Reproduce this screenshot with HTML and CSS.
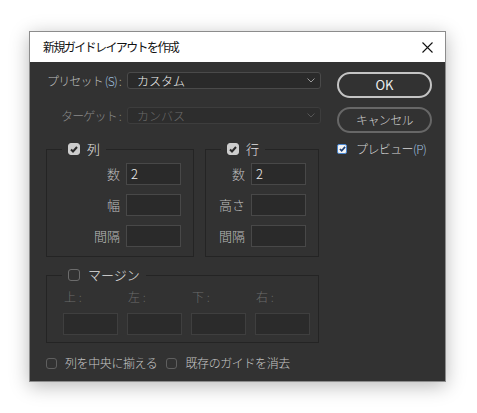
FILE: index.html
```html
<!DOCTYPE html>
<html lang="ja">
<head>
<meta charset="utf-8">
<title>新規ガイドレイアウトを作成</title>
<link rel="stylesheet" href="styles.css">
</head>
<body>
<div class="stage">
  <div class="dialog">
    <div class="titlebar">
      <span class="title">新規ガイドレイアウトを作成</span>
      <svg class="close" width="11" height="11" viewBox="0 0 11 11"><path d="M0.5 0.5L10.5 10.5M10.5 0.5L0.5 10.5" stroke="#111" stroke-width="1.1" fill="none"/></svg>
    </div>
    <div class="content">
      <div class="main">
        <div class="field-row">
          <span class="flabel"><span>プリセット <span class="acc">(S)</span> :</span></span>
          <div class="select">
            <span class="sel-text">カスタム</span>
            <svg width="8" height="5" viewBox="0 0 8 5"><path d="M0.5 0.5L4 4L7.5 0.5" stroke="#9a9a9a" fill="none"/></svg>
          </div>
        </div>
        <div class="field-row second disabled">
          <span class="flabel"><span>ターゲット :</span></span>
          <div class="select">
            <span class="sel-text">カンバス</span>
            <svg width="8" height="5" viewBox="0 0 8 5"><path d="M0.5 0.5L4 4L7.5 0.5" stroke="#555" fill="none"/></svg>
          </div>
        </div>
        <div class="groups">
          <fieldset class="group cols">
            <legend><span class="cb checked"><svg width="8" height="7" viewBox="0 0 8 7"><path d="M1 3.5L3 5.5L7 1" stroke="#2a2a2a" stroke-width="2" fill="none"/></svg></span><span class="lg-text">列</span></legend>
            <div class="grid">
              <span class="glabel">数</span><div class="input">2</div>
              <span class="glabel">幅</span><div class="input"></div>
              <span class="glabel">間隔</span><div class="input"></div>
            </div>
          </fieldset>
          <fieldset class="group rows">
            <legend><span class="cb checked"><svg width="8" height="7" viewBox="0 0 8 7"><path d="M1 3.5L3 5.5L7 1" stroke="#2a2a2a" stroke-width="2" fill="none"/></svg></span><span class="lg-text">行</span></legend>
            <div class="grid">
              <span class="glabel">数</span><div class="input">2</div>
              <span class="glabel">高さ</span><div class="input"></div>
              <span class="glabel">間隔</span><div class="input"></div>
            </div>
          </fieldset>
        </div>
        <fieldset class="group margin">
          <legend><span class="cb"></span><span class="lg-text">マージン</span></legend>
          <div class="mgrid">
            <div class="mcell"><span class="mlabel">上 :</span><div class="input off"></div></div>
            <div class="mcell"><span class="mlabel">左 :</span><div class="input off"></div></div>
            <div class="mcell"><span class="mlabel">下 :</span><div class="input off"></div></div>
            <div class="mcell"><span class="mlabel">右 :</span><div class="input off"></div></div>
          </div>
        </fieldset>
        <div class="bottom">
          <span class="cb small"></span><span class="btext">列を中央に揃える</span>
          <span class="cb small"></span><span class="btext">既存のガイドを消去</span>
        </div>
      </div>
      <div class="side">
        <div class="btn primary">OK</div>
        <div class="btn">キャンセル</div>
        <div class="preview">
          <span class="cb focus"><svg width="8" height="7" viewBox="0 0 8 7"><path d="M1 3.5L3 5.5L7 1" stroke="#1d3f73" stroke-width="2" fill="none"/></svg></span>
          <span class="ptext">プレビュー<span class="acc">(P)</span></span>
        </div>
      </div>
    </div>
  </div>
</div>
</body>
</html>
```
FILE: styles.css
```css
html, body {
  margin: 0;
  padding: 0;
  background: #ffffff;
}
body {
  font-family: "Noto Sans CJK JP", "Noto Sans", sans-serif;
  width: 477px;
  height: 413px;
  overflow: hidden;
}
.stage {
  padding: 31px 0 0 29px;
}
.dialog {
  width: 417px;
  box-sizing: border-box;
  border: 1px solid #8c8c8c;
  box-shadow: 0 4px 18px rgba(0, 0, 0, 0.28);
  background: #323232;
}
.titlebar {
  height: 30px;
  background: #ffffff;
  display: flex;
  align-items: center;
  justify-content: space-between;
  padding: 0 12px 0 13px;
}
.title {
  font-size: 12px;
  letter-spacing: -1.6px;
  color: #111;
  line-height: 14px;
}
.close {
  display: block;
}
.content {
  height: 319px;
  display: flex;
  padding-left: 16px;
  color: #d4d4d4;
  font-weight: 300;
}
.main {
  width: 275px;
  display: flex;
  flex-direction: column;
}
.field-row {
  display: grid;
  grid-template-columns: 75px 194px;
  column-gap: 6px;
  align-items: center;
  margin-top: 10px;
  height: 17px;
}
.field-row.second {
  margin-top: 18px;
}
.flabel {
  display: flex;
  justify-content: flex-end;
  font-size: 12px;
  line-height: 14px;
  letter-spacing: -0.8px;
  color: #bdbdbd;
  white-space: nowrap;
}
.acc {
  color: #9fbfdf;
}
.select {
  height: 17px;
  box-sizing: border-box;
  border: 1px solid #4a4a4a;
  border-radius: 3px;
  background: #2a2a2a;
  display: flex;
  align-items: center;
  justify-content: space-between;
  padding: 0 5px 0 9px;
}
.sel-text {
  font-size: 12px;
  line-height: 14px;
  color: #f0f0f0;
}
.disabled .flabel {
  color: #8a8a8a;
}
.disabled .select {
  border-color: #3d3d3d;
  background: #2d2d2d;
}
.disabled .sel-text {
  color: #6a6a6a;
}
.groups {
  display: flex;
  margin-top: 18px;
  column-gap: 11px;
}
.group {
  margin: 0;
  padding: 0;
  border: 1px solid #242424;
  box-sizing: border-box;
}
.group legend {
  margin-left: 15px;
  padding: 0 6px;
  height: 14px;
  display: flex;
  align-items: center;
  column-gap: 7px;
}
.lg-text {
  font-size: 13px;
  line-height: 14px;
  color: #e2e2e2;
}
.cb {
  width: 12px;
  height: 12px;
  box-sizing: border-box;
  border-radius: 3px;
  border: 1.5px solid #6c6c6c;
  display: inline-flex;
  align-items: center;
  justify-content: center;
  flex: none;
}
.cb.checked {
  background: #cdcdcd;
  border-color: #cdcdcd;
}
.cb.small {
  width: 11px;
  height: 11px;
  border-color: #5f5f5f;
}
.cb.focus {
  width: 10px;
  height: 10px;
  background: #f4f4f4;
  border: 1px solid #4a86cf;
  border-radius: 2px;
}
.cb.focus svg {
  width: 7px;
  height: 6px;
}
.cols {
  width: 148px;
}
.rows {
  width: 114px;
}
.grid {
  display: grid;
  grid-template-columns: auto 55px;
  justify-content: end;
  column-gap: 6px;
  row-gap: 9px;
  align-items: center;
  padding: 7px 12px 9px 0;
}
.glabel {
  font-size: 13px;
  line-height: 14px;
  color: #bdbdbd;
  text-align: right;
}
.input {
  height: 22px;
  box-sizing: border-box;
  border: 1px solid #484848;
  background: #2a2a2a;
  color: #f0f0f0;
  font-size: 13px;
  line-height: 20px;
  padding-left: 4px;
}
.input.off {
  border-color: #3f3f3f;
  background: #2b2b2b;
}
.margin {
  width: 273px;
  margin-top: 11px;
}
.margin legend {
  column-gap: 8px;
}
.mgrid {
  display: grid;
  grid-template-columns: repeat(4, 55px);
  column-gap: 9px;
  padding: 8px 0 7px 16px;
}
.mcell {
  display: flex;
  flex-direction: column;
  row-gap: 9px;
}
.mlabel {
  font-size: 12px;
  line-height: 14px;
  color: #6c6c6c;
  padding-left: 1px;
}
.bottom {
  display: flex;
  align-items: center;
  margin-top: 13px;
  height: 14px;
}
.btext {
  font-size: 12px;
  line-height: 14px;
  color: #c6c6c6;
  letter-spacing: -0.4px;
  margin-left: 8px;
  margin-right: 9px;
}
.side {
  margin-left: 16px;
  width: 95px;
  display: flex;
  flex-direction: column;
}
.btn {
  height: 26px;
  box-sizing: border-box;
  border: 2px solid #676767;
  border-radius: 13px;
  display: flex;
  align-items: center;
  justify-content: center;
  font-size: 12px;
  line-height: 14px;
  color: #d0d0d0;
  margin-top: 9px;
  letter-spacing: -0.6px;
}
.btn.primary {
  margin-top: 10px;
  border-color: #c4c4c4;
  color: #ededed;
  font-size: 13px;
  letter-spacing: 0;
  font-weight: 400;
}
.preview {
  display: flex;
  align-items: center;
  margin-top: 9px;
  height: 14px;
}
.ptext {
  font-size: 12px;
  line-height: 14px;
  color: #d6d6d6;
  margin-left: 9px;
  letter-spacing: -0.6px;
}
```
